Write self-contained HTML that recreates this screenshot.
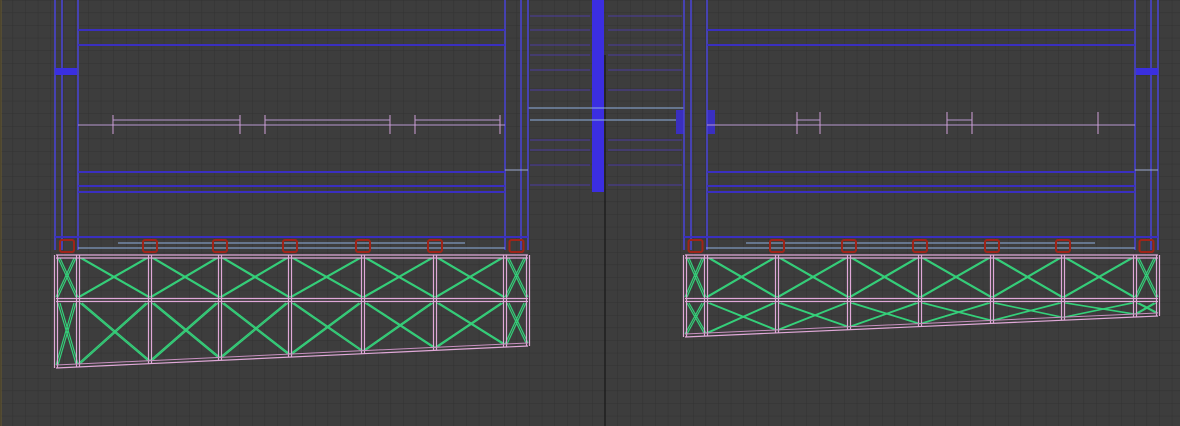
<!DOCTYPE html>
<html><head><style>
html,body{margin:0;padding:0;background:#3c3c3c;width:1180px;height:426px;overflow:hidden}
svg{display:block}
</style></head><body>
<svg id="s" width="1180" height="426" viewBox="0 0 1180 426" xmlns="http://www.w3.org/2000/svg">
<defs>
<pattern id="g" width="12.6" height="12.6" patternUnits="userSpaceOnUse">
<path d="M0 0H12.6M0 0V12.6" stroke="#323232" stroke-width="1" fill="none"/>
</pattern>
</defs>
<rect width="1180" height="426" fill="#3d3d3d"/>
<rect width="1180" height="426" fill="url(#g)"/>
<line x1="1" y1="0" x2="1" y2="426" stroke="#6a5a2a" stroke-width="1"/>
<g id="dyn"></g>
</svg>
<script>
var d=document.getElementById('dyn'),h='';
function L(x1,y1,x2,y2,c,w){h+='<line x1="'+x1+'" y1="'+y1+'" x2="'+x2+'" y2="'+y2+'" stroke="'+c+'" stroke-width="'+(w||1)+'"/>';}
function R(x,y,w,hh,c){h+='<rect x="'+x+'" y="'+y+'" width="'+w+'" height="'+hh+'" fill="'+c+'"/>';}
var B='#3a2fc0',B2='#4a44d8',LB='#8fb0e0',P='#e0a8d8',G='#35d07a',RD='#a02418';
R(592,0,12,192,'#3b2ee0');
L(605,55,605,426,'#1e1e1e',1.5);
for(var y of [16,30,45,55,70,90,140,150,165,185]){L(530,y,590,y,'#4b3aa0');L(608,y,682,y,'#4b3aa0');}
L(528,108,684,108,LB);L(530,120,680,120,LB);
R(676,110,8,24,B);R(707,110,8,24,B);
function side(a,b,mirror){
 [a,a+7,a+23].forEach(function(x){L(x,0,x,250,B2,1.5)});
 [b-23,b-7,b].forEach(function(x){L(x,0,x,250,B2,1.5)});
 [30,45,172,186,192].forEach(function(y){L(a+23,y,b-23,y,B,2)});
 L(a,237,b,237,B,2);
 L(a+23,125,b-23,125,'#b898d0');
 L(b-23,170,b,170,'#9aa8d0');
 R(mirror?b-22:a,68,22,7,'#3a2fe0');
}
side(55,528,false);side(684,1158,true);
[[113,240],[265,390],[415,500]].forEach(function(p){L(p[0],115,p[0],134,'#d0a0d8');L(p[1],115,p[1],134,'#d0a0d8');L(p[0],120,p[1],120,'#b898d0');});
[[797,820],[947,972],[1098,1098]].forEach(function(p){L(p[0],112,p[0],134,'#d0a0d8');L(p[1],112,p[1],134,'#d0a0d8');L(p[0],120,p[1],120,'#b898d0');});
function truss(xs,top,mid,bl,br){
 var x0=xs[0],xn=xs[xs.length-1];
 function by(x){return bl+(br-bl)*(x-x0)/(xn-x0);}
 L(xs[1]+40,243,xs[xs.length-2]-40,243,LB);L(xs[1],248,xs[xs.length-2],248,LB);
 var bx=[(x0+xs[1])/2].concat(xs.slice(2,xs.length-2),[(xs[xs.length-2]+xn)/2]);
 bx.forEach(function(x){h+='<rect x="'+(x-7)+'" y="240" width="14" height="12" rx="2" fill="none" stroke="'+RD+'" stroke-width="2"/>';});
 for(var i=0;i<xs.length-1;i++){var a=xs[i],b=xs[i+1];
  L(a+2,top+3,b-2,mid-3,G,1.2);L(a+4,top+3,b,mid-3,G,1.2);
  L(b-2,top+3,a+2,mid-3,G,1.2);L(b-4,top+3,a,mid-3,G,1.2);
  L(a+2,mid+3,b-2,by(b)-3,G,1.2);L(a+4,mid+3,b,by(b)-3,G,1.2);
  L(b-2,mid+3,a+2,by(a)-3,G,1.2);L(b-4,mid+3,a,by(a)-3,G,1.2);
 }
 xs.forEach(function(x){L(x-1.5,top,x-1.5,by(x),P,1.2);L(x+1.5,top,x+1.5,by(x),P,1.2);});
 L(x0,top,xn,top,P,1.2);L(x0,top+3,xn,top+3,P,1.2);
 L(x0,mid-1.5,xn,mid-1.5,P,1.2);L(x0,mid+1.5,xn,mid+1.5,P,1.2);
 L(x0,bl,xn,br,P,1.2);L(x0,bl-3,xn,br-3,'#c890c0',1);
}
truss([56,78,150,220,290,363,435,505,528],255,300,368,346);
truss([685,706,777,849,920,992,1063,1135,1158],255,300,337,316);
d.innerHTML=h;
</script>
</body></html>
